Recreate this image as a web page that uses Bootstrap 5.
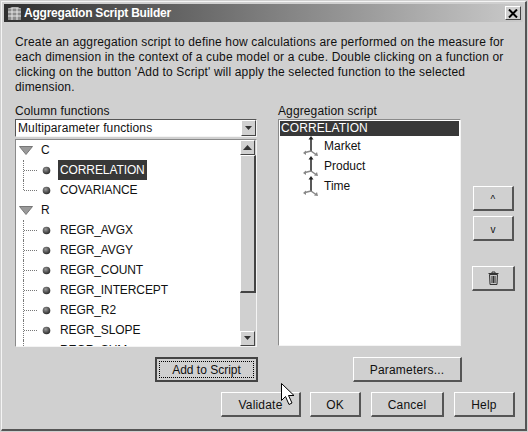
<!DOCTYPE html>
<html lang="en">
<head>
    <meta charset="UTF-8">
    <title>Aggregation Script Builder</title>
    <link href="https://cdn.jsdelivr.net/npm/bootstrap@5.3.0/dist/css/bootstrap.min.css" rel="stylesheet">
    <style>
        html, body { width: 528px; height: 432px; overflow: hidden; }
        body {
            padding: 1px 0 0 1px;
            background: #d0d0d0;
            font: 12px/15px "Liberation Sans", Arial, sans-serif;
            letter-spacing: .12px;
            color: #111;
        }
        .win-frame {
            width: 526px;
            height: 430px;
            position: relative;
            background: #d0d0d0;
            border-top: 1px solid #f4f4f4;
            border-left: 1px solid #f4f4f4;
            border-right: 2px solid #555;
            border-bottom: 2px solid #555;
        }
        .win-title {
            height: 18px;
            margin: 2px 2px 0 2px;
            padding: 0 2px 0 3px;
            background: linear-gradient(to right, #303030, #cacaca);
            color: #fff;
            font: bold 12px/18px "Liberation Sans", sans-serif;
            letter-spacing: -.22px;
        }
        .title-icon { margin-right: 2px; }
        .win-close {
            width: 16px;
            height: 14px;
            padding: 0;
            background: #d0d0d0;
            border: 1px solid;
            border-color: #fff #444 #444 #fff;
        }
        .win-desc { margin: 13px 0 0 13px; height: 60px; letter-spacing: .16px; white-space: nowrap; }
        .win-panes { margin: 9px 0 0 13px; }
        .pane-left { width: 242px; }
        .pane-right { width: 183px; margin-left: 21px; }
        .pane-label { height: 15px; margin-bottom: 0; }
        .win-combo {
            height: 18px;
            border: 1px solid;
            border-color: #555 #f4f4f4 #f4f4f4 #555;
            background: #fff;
            padding-left: 2px;
            line-height: 16px;
        }
        .scroll-btn {
            width: 15px;
            height: 15px;
            background: #d0d0d0;
            border: 1px solid;
            border-color: #fff #444 #444 #fff;
        }
        .combo-btn { margin: 0; height: 16px; }
        .tree-list {
            height: 208px;
            margin-top: 2px;
            background: #fff;
            border: 1px solid;
            border-color: #8a8a8a #f4f4f4 #f4f4f4 #8a8a8a;
            overflow: hidden;
        }
        .tree-rows { width: 224px; padding: 0; margin: 0; list-style: none; position: relative; }
        .tree-row { height: 20px; padding-left: 4px; }
        .tree-row svg { flex: none; }
        .tree-arrow { margin: 0 8px 0 -1px; }
        .tree-group { margin-left: 3px; width: 1px; height: 20px; border-left: 1px dotted #777; flex: none; }
        .tree-group.last { height: 10px; align-self: flex-start; }
        .tree-dash { width: 13px; border-top: 1px dotted #777; flex: none; }
        .tree-ball { margin: 0 7px 0 5px; }
        .tree-name { padding: 0 2px; line-height: 20px; letter-spacing: -.1px; }
        .tree-name.picked, .script-head { background: #383838; color: #fff; }
        .tree-scroll { width: 16px; background: #d0d0d0; }
        .scroll-thumb {
            height: 138px;
            background: #d0d0d0;
            border: 1px solid;
            border-color: #fff #444 #444 #fff;
            border-width: 1px 2px 2px 1px;
        }
        .script-list {
            height: 227px;
            padding: 1px;
            background: #fff;
            border: 1px solid;
            border-color: #8a8a8a #f4f4f4 #f4f4f4 #8a8a8a;
        }
        .script-head { height: 15px; line-height: 15px; padding-left: 1px; letter-spacing: .1px; }
        .script-row { height: 20px; padding-left: 23px; letter-spacing: 0; }
        .script-row svg { margin-right: 5px; }
        .side-btns { width: 43px; margin: 70px 0 0 11px; padding-top: 12px; }
        .win-btn, .win-btn:hover {
            padding: 3px 0 0;
            border-radius: 0;
            background: #d0d0d0;
            color: #111;
            font-size: 12px;
            line-height: 15px;
            letter-spacing: .2px;
            border: solid;
            border-width: 1px 2px 2px 1px;
            border-color: #fff #555 #555 #fff;
            height: 25px;
        }
        .btn-narrow, .btn-narrow:hover { width: 41px; height: 25px; margin-bottom: 5px; font-size: 10px; }
        .btn-trash, .btn-trash:hover { width: 43px; margin-top: 20px; padding: 0; }
        .win-row1 { margin: 10px 0 0 0; }
        .btn-add, .btn-add:hover { width: 103px; margin-left: 153px; padding: 2px; border: 2px solid #444; letter-spacing: 0; }
        .btn-add span { display: block; border: 1px dotted #000; height: 100%; line-height: 17px; }
        .btn-params { width: 109px; margin-left: 95px; }
        .win-row2 { margin: 10px 0 0 219px; }
        .btn-validate { width: 80px; }
        .btn-ok { width: 51px; margin-left: 9px; }
        .btn-cancel { width: 73px; margin-left: 10px; }
        .btn-help { width: 61px; margin-left: 10px; }
        .win-cursor { position: absolute; left: 279px; top: 381px; }
    </style>
</head>
<body>
    <div class="win-frame">
        <div class="win-title d-flex align-items-center">
            <svg class="title-icon" width="15" height="15" viewBox="0 0 15 15">
                <rect x="1" y="2" width="13" height="12" fill="#8c8c8c"/>
                <path d="M1 3 L5 1 H11 L14 3" fill="#b5b5b5"/>
                <path d="M1 6H14M1 10H14M5 2V14M10 2V14" stroke="#e6e6e6" stroke-width="1"/>
            </svg>
            <span>Aggregation Script Builder</span>
            <button class="win-close ms-auto d-flex align-items-center justify-content-center" type="button" aria-label="Close">
                <svg width="10" height="9" viewBox="0 0 10 9"><path d="M1 .5L9 8.500M9 .5L1 8.500" stroke="#000" stroke-width="2"/></svg>
            </button>
        </div>

        <p class="win-desc">Create an aggregation script to define how calculations are performed on the measure for<br>each dimension in the context of a cube model or a cube. Double clicking on a function or<br>clicking on the button 'Add to Script' will apply the selected function to the selected<br>dimension.</p>

        <div class="win-panes d-flex">
            <div class="pane-left">
                <div class="pane-label">Column functions</div>
                <div class="win-combo d-flex align-items-center justify-content-between">
                    <span>Multiparameter functions</span>
                    <span class="scroll-btn combo-btn d-flex align-items-center justify-content-center">
                        <svg width="9" height="5"><path d="M1 0H8L4.500 4Z" fill="#333"/></svg>
                    </span>
                </div>
                <div class="tree-list d-flex">
                    <ul class="tree-rows" id="tree"></ul>
                    <div class="tree-scroll ms-auto d-flex flex-column">
                        <span class="scroll-btn d-flex align-items-center justify-content-center">
                            <svg width="9" height="5"><path d="M4.500 0L9 5H0Z" fill="#333"/></svg>
                        </span>
                        <div class="scroll-thumb"></div>
                        <span class="scroll-btn mt-auto d-flex align-items-center justify-content-center">
                            <svg width="9" height="5"><path d="M1 0H8L4.500 4Z" fill="#333"/></svg>
                        </span>
                    </div>
                </div>
            </div>

            <div class="pane-right">
                <div class="pane-label">Aggregation script</div>
                <div class="script-list" id="script">
                    <div class="script-head">CORRELATION</div>
                </div>
            </div>

            <div class="side-btns d-flex flex-column align-items-center">
                <button class="btn win-btn btn-narrow" type="button">^</button>
                <button class="btn win-btn btn-narrow" type="button">v</button>
                <button class="btn win-btn btn-trash d-flex align-items-center justify-content-center" type="button" aria-label="Delete">
                    <svg width="11" height="14" viewBox="0 0 11 14">
                        <path d="M.5 2.500H10.500M4 2V1H7V2" fill="none" stroke="#333"/>
                        <path d="M1.500 3.500H9.500L9 13.500H2Z" fill="#c4c4c4" stroke="#333"/>
                        <path d="M4 5V12M5.500 5V12M7 5V12" stroke="#333"/>
                    </svg>
                </button>
            </div>
        </div>

        <div class="win-row1 d-flex">
            <button class="btn win-btn btn-add" type="button"><span>Add to Script</span></button>
            <button class="btn win-btn btn-params" type="button">Parameters...</button>
        </div>
        <div class="win-row2 d-flex">
            <button class="btn win-btn btn-validate" type="button">Validate</button>
            <button class="btn win-btn btn-ok" type="button">OK</button>
            <button class="btn win-btn btn-cancel" type="button">Cancel</button>
            <button class="btn win-btn btn-help" type="button">Help</button>
        </div>

        <svg class="win-cursor" width="16" height="24" viewBox="0 0 16 24">
            <path d="M.5 .5V17.500L4.500 13.500L8 21.500L11 20L7.500 12.500H13Z" fill="#fff" stroke="#000"/>
        </svg>
    </div>

    <script>
        const ball = '<svg class="tree-ball" width="9" height="9" viewBox="0 0 9 9"><defs><radialGradient id="b" cx=".4" cy=".35" r=".7"><stop offset="0" stop-color="#999"/><stop offset="1" stop-color="#222"/></radialGradient></defs><circle cx="4.500" cy="4.500" r="3.800" fill="url(#b)"/></svg>';
        const arrow = '<svg class="tree-arrow" width="14" height="9" viewBox="0 0 14 9"><path d="M.5 .5H13.500L7 8.500Z" fill="#9a9a9a" stroke="#777"/></svg>';
        const rows = [
            ["C"], ["CORRELATION", 1, 1], ["COVARIANCE", 1, 0, 1],
            ["R"], ["REGR_AVGX", 1], ["REGR_AVGY", 1], ["REGR_COUNT", 1], ["REGR_INTERCEPT", 1],
            ["REGR_R2", 1], ["REGR_SLOPE", 1], ["REGR_SUM", 1]
        ];
        document.getElementById("tree").innerHTML = rows.map(function (r) {
            if (!r[1]) return '<li class="tree-row d-flex align-items-center">' + arrow + '<span>' + r[0] + '</span></li>';
            return '<li class="tree-row d-flex align-items-center"><span class="tree-group' + (r[3] ? ' last' : '') + '"></span><span class="tree-dash"></span>' + ball +
                '<span class="tree-name' + (r[2] ? ' picked' : '') + '">' + r[0] + '</span></li>';
        }).join("");

        const axes = '<svg width="16" height="20" viewBox="0 0 16 20"><path d="M8 3V15" stroke="#222" stroke-width="1.500"/><path d="M8 0L10.500 3.500H5.500Z" fill="#222"/><path d="M8 15L2 16.500" stroke="#888" stroke-width="1.500"/><path d="M0 17L3 14.500V19Z" fill="#888"/><path d="M8 15L13 18.500" stroke="#888" stroke-width="1.500"/><path d="M15 20L11 19.500L14 16Z" fill="#888"/></svg>';
        document.getElementById("script").insertAdjacentHTML("beforeend", ["Market", "Product", "Time"].map(function (n) {
            return '<div class="script-row d-flex align-items-center">' + axes + '<span>' + n + '</span></div>';
        }).join(""));
    </script>
    <script src="https://cdn.jsdelivr.net/npm/bootstrap@5.3.0/dist/js/bootstrap.bundle.min.js"></script>
</body>
</html>
